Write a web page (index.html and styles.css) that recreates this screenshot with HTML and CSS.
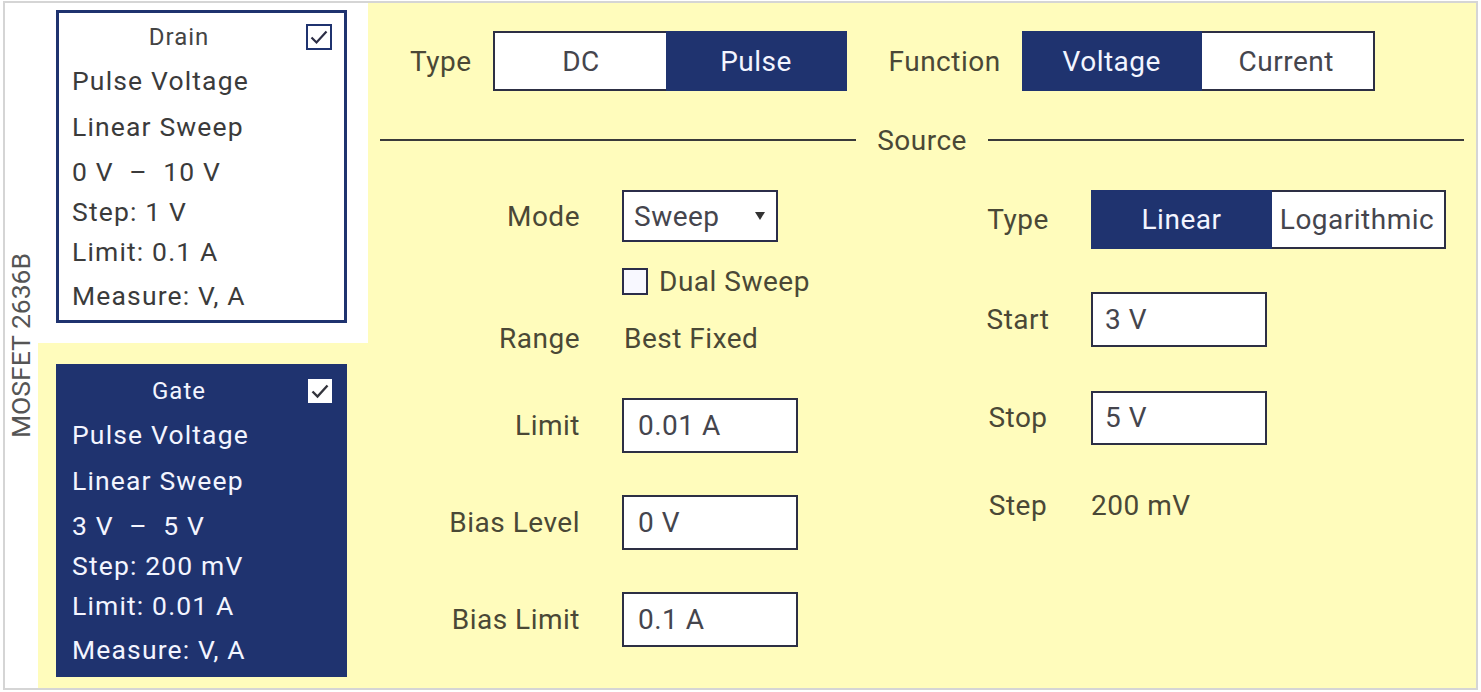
FILE: index.html
```html
<!DOCTYPE html>
<html lang="en">
<head>
<meta charset="utf-8">
<title>MOSFET 2636B – Source</title>
<link rel="stylesheet" href="styles.css">
</head>
<body>
<div class="frame">
  <div class="side"><span class="side-text">MOSFET 2636B</span></div>

  <div class="devices">
    <div class="dev-cell dev-cell--drain">
      <div class="card card--outline">
        <div class="card-head">
          <span class="card-title">Drain</span>
          <span class="chk chk--outline">
            <svg viewBox="0 0 26 26" width="26" height="26"><path d="M5.5 13.5 L10.5 18.5 L20.5 7.5" fill="none" stroke="#2b2d45" stroke-width="2.2"/></svg>
          </span>
        </div>
        <div class="card-line">Pulse Voltage</div>
        <div class="card-line">Linear Sweep</div>
        <div class="card-line">0 V &nbsp;–&nbsp; 10 V</div>
        <div class="card-line">Step: 1 V</div>
        <div class="card-line">Limit: 0.1 A</div>
        <div class="card-line">Measure: V, A</div>
      </div>
    </div>
    <div class="dev-cell dev-cell--gate">
      <div class="card card--filled">
        <div class="card-head">
          <span class="card-title">Gate</span>
          <span class="chk chk--white">
            <svg viewBox="0 0 24 24" width="24" height="24"><path d="M4.5 12.5 L9.5 17.5 L19.5 6.5" fill="none" stroke="#33343c" stroke-width="2.4"/></svg>
          </span>
        </div>
        <div class="card-line">Pulse Voltage</div>
        <div class="card-line">Linear Sweep</div>
        <div class="card-line">3 V &nbsp;–&nbsp; 5 V</div>
        <div class="card-line">Step: 200 mV</div>
        <div class="card-line">Limit: 0.01 A</div>
        <div class="card-line">Measure: V, A</div>
      </div>
    </div>
  </div>

  <main class="panel">
    <div class="top-row">
      <span class="lbl">Type</span>
      <div class="seg">
        <span class="seg-btn seg-btn--dc">DC</span>
        <span class="seg-btn seg-btn--pulse is-on">Pulse</span>
      </div>
      <span class="lbl lbl--func">Function</span>
      <div class="seg">
        <span class="seg-btn seg-btn--volt is-on">Voltage</span>
        <span class="seg-btn seg-btn--curr">Current</span>
      </div>
    </div>

    <div class="divider">
      <span class="divider-line"></span>
      <span class="divider-text">Source</span>
      <span class="divider-line"></span>
    </div>

    <div class="source">
      <div class="src-left">
        <div class="frow frow--mode">
          <span class="flabel">Mode</span>
          <div class="select"><span>Sweep</span><span class="caret"></span></div>
        </div>
        <div class="frow frow--dual">
          <span class="flabel"></span>
          <span class="box"></span>
          <span class="box-label">Dual Sweep</span>
        </div>
        <div class="frow frow--range">
          <span class="flabel">Range</span>
          <span class="value">Best Fixed</span>
        </div>
        <div class="frow frow--field">
          <span class="flabel">Limit</span>
          <input class="field" type="text" value="0.01 A">
        </div>
        <div class="frow frow--field frow--bias">
          <span class="flabel">Bias Level</span>
          <input class="field" type="text" value="0 V">
        </div>
        <div class="frow frow--field frow--bias">
          <span class="flabel">Bias Limit</span>
          <input class="field" type="text" value="0.1 A">
        </div>
      </div>

      <div class="src-right">
        <div class="rrow rrow--type">
          <span class="rlabel">Type</span>
          <div class="seg seg--scale">
            <span class="seg-btn seg-btn--lin is-on">Linear</span>
            <span class="seg-btn seg-btn--log">Logarithmic</span>
          </div>
        </div>
        <div class="rrow rrow--field">
          <span class="rlabel">Start</span>
          <input class="field" type="text" value="3 V">
        </div>
        <div class="rrow rrow--field rrow--stop">
          <span class="rlabel">Stop</span>
          <input class="field" type="text" value="5 V">
        </div>
        <div class="rrow rrow--step">
          <span class="rlabel">Step</span>
          <span class="value">200 mV</span>
        </div>
      </div>
    </div>
  </main>
</div>
</body>
</html>
```

FILE: styles.css
```css
* { box-sizing: border-box; }

html, body {
  margin: 0;
  padding: 0;
  background: #ffffff;
}

body {
  font-family: Roboto, "Liberation Sans", Arial, sans-serif;
  color: #4a4836;
}

.frame {
  margin: 1px 0 0 3px;
  width: 1475px;
  height: 689px;
  border: 2px solid #d5d5d5;
  display: flex;
  overflow: hidden;
}

/* vertical instrument label */
.side {
  width: 33px;
  flex: none;
  background: #ffffff;
  display: flex;
  align-items: center;
  justify-content: center;
}

.side-text {
  writing-mode: vertical-rl;
  transform: rotate(180deg);
  font-size: 26.5px;
  line-height: 1;
  color: #555555;
  white-space: nowrap;
}

/* device cards column */
.devices {
  width: 330px;
  flex: none;
  display: flex;
  flex-direction: column;
}

.dev-cell--drain {
  height: 340px;
  background: #ffffff;
  padding: 7px 21px 20px 18px;
}

.dev-cell--gate {
  flex: 1;
  background: #fffcbc;
  padding: 21px 21px 11px 18px;
}

.card {
  width: 291px;
  height: 313px;
  border: 3px solid #1f336f;
  padding: 4px 12px 0 13px;
  display: grid;
  grid-template-rows: 40px 48px 44px 46px 34px 46px 42px;
  align-items: center;
}

.card--outline {
  background: #ffffff;
  color: #3b3b3b;
}

.card--filled {
  background: #1f336f;
  color: #f3f5ff;
}

.card-head {
  display: flex;
  align-items: center;
}

.card-title {
  flex: 1;
  text-align: center;
  font-size: 24px;
  letter-spacing: 1px;
}

.card--outline .card-title { color: #444444; }

.chk {
  flex: none;
  margin-left: 20px;
  display: block;
}

.chk svg { display: block; }

.chk--outline {
  width: 26px;
  height: 26px;
  border: 2px solid #1f336f;
  background: #ffffff;
}

.chk--outline svg {
  margin: -2px;
}

.chk--white {
  width: 24px;
  height: 24px;
  background: #ffffff;
  margin-left: 22px;
}

.card-line {
  font-size: 26.5px;
  letter-spacing: 1.15px;
  white-space: nowrap;
  line-height: 1.2;
}

/* main yellow panel */
.panel {
  flex: 1;
  background: #fffcbc;
  padding: 28px 12px 0 12px;
  font-size: 28px;
  letter-spacing: 0.5px;
}

.top-row {
  display: flex;
  align-items: center;
  margin-left: 30px;
  height: 60px;
}

.lbl {
  margin-right: 21px;
  white-space: nowrap;
}

.lbl--func {
  margin-left: 42px;
}

.seg {
  display: flex;
  height: 60px;
  border: 2px solid #2d2f44;
  background: #ffffff;
}

.seg-btn {
  display: flex;
  align-items: center;
  justify-content: center;
  color: #45454d;
  white-space: nowrap;
}

.seg-btn.is-on {
  background: #1f336f;
  color: #f3f5ff;
  box-shadow: 0 0 0 2px #1f336f;
}

.seg-btn--dc { width: 173px; }
.seg-btn--pulse { width: 177px; }
.seg-btn--volt { width: 176px; }
.seg-btn--curr { width: 173px; }
.seg-btn--lin { width: 177px; }
.seg-btn--log { width: 174px; }

.seg--scale { height: 59px; }

/* section divider */
.divider {
  display: flex;
  align-items: center;
  height: 30px;
  margin-top: 34px;
}

.divider-line {
  flex: 1;
  height: 2px;
  background: #3a3a3a;
}

.divider-text {
  margin: 0 21px;
  white-space: nowrap;
}

/* source form */
.source {
  display: flex;
  margin-top: 35px;
}

.src-left {
  width: 590px;
  flex: none;
}

.src-right {
  flex: 1;
}

.frow, .rrow {
  display: flex;
  align-items: center;
}

.flabel {
  width: 200px;
  flex: none;
  text-align: right;
  margin-right: 42px;
  white-space: nowrap;
}

.rlabel {
  width: 96px;
  flex: none;
  text-align: center;
  margin-right: 25px;
  white-space: nowrap;
}

.frow--mode { height: 52px; }

.frow--dual {
  height: 27px;
  margin-top: 26px;
}

.frow--range {
  height: 40px;
  margin-top: 23px;
}

.frow--field {
  height: 55px;
  margin-top: 40px;
}

.frow--bias { margin-top: 42px; }

.select {
  width: 156px;
  height: 52px;
  border: 2px solid #2b2d4a;
  background: #ffffff;
  display: flex;
  align-items: center;
  justify-content: space-between;
  padding: 0 11px 0 10px;
  color: #45454d;
}

.caret {
  width: 0;
  height: 0;
  border-left: 5px solid transparent;
  border-right: 5px solid transparent;
  border-top: 8px solid #333333;
}

.box {
  width: 26px;
  height: 27px;
  border: 2px solid #2b2d4a;
  background: #f8f8ff;
  flex: none;
}

.box-label {
  margin-left: 11px;
  white-space: nowrap;
}

.value {
  white-space: nowrap;
  margin-left: 2px;
}

.field {
  width: 176px;
  height: 55px;
  border: 2px solid #2d2f44;
  background: #ffffff;
  padding: 0 0 0 14px;
  margin: 0;
  font-family: Roboto, "Liberation Sans", Arial, sans-serif;
  font-size: 28px;
  letter-spacing: 0.5px;
  color: #45454d;
  outline: none;
  border-radius: 0;
}

.rrow--type { height: 59px; }

.rrow--field {
  height: 55px;
  margin-top: 43px;
}

.rrow--stop .field { height: 54px; }

.rrow--step {
  height: 40px;
  margin-top: 40px;
}

.rrow--step .value { margin-left: 0; }

.src-right .field { padding-left: 12px; }
```
